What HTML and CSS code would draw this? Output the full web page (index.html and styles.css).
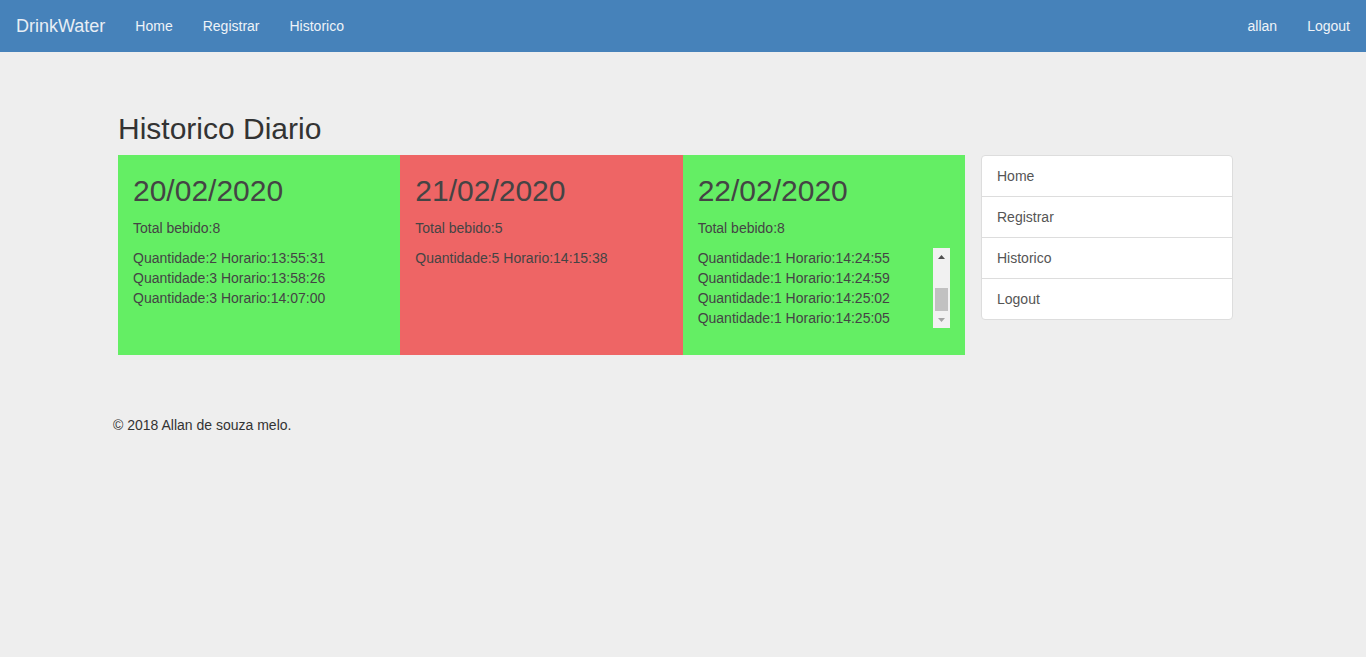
FILE: index.html
```html
<!DOCTYPE html>
<html lang="pt">
<head>
<meta charset="utf-8">
<title>DrinkWater</title>
<link rel="stylesheet" href="styles.css">
</head>
<body>
<nav class="navbar">
  <div class="nav-left">
    <a class="brand" href="#">DrinkWater</a>
    <a class="nav-link" href="#">Home</a>
    <a class="nav-link" href="#">Registrar</a>
    <a class="nav-link" href="#">Historico</a>
  </div>
  <div class="nav-right">
    <a class="nav-link" href="#">allan</a>
    <a class="nav-link" href="#">Logout</a>
  </div>
</nav>
<main class="container">
  <div class="row">
    <section class="main-col">
      <h2 class="page-title">Historico Diario</h2>
      <div class="days">
        <div class="day ok">
          <h1 class="date">20/02/2020</h1>
          <p class="total">Total bebido:8</p>
          <ul class="entries">
            <li>Quantidade:2 Horario:13:55:31</li>
            <li>Quantidade:3 Horario:13:58:26</li>
            <li>Quantidade:3 Horario:14:07:00</li>
          </ul>
        </div>
        <div class="day bad">
          <h1 class="date">21/02/2020</h1>
          <p class="total">Total bebido:5</p>
          <ul class="entries">
            <li>Quantidade:5 Horario:14:15:38</li>
          </ul>
        </div>
        <div class="day ok">
          <h1 class="date">22/02/2020</h1>
          <p class="total">Total bebido:8</p>
          <div class="scroll-wrap">
            <ul class="entries scroll" id="scrollList">
              <li>Quantidade:1 Horario:14:24:38</li>
              <li>Quantidade:1 Horario:14:24:42</li>
              <li>Quantidade:1 Horario:14:24:47</li>
              <li>Quantidade:1 Horario:14:24:51</li>
              <li>Quantidade:1 Horario:14:24:55</li>
              <li>Quantidade:1 Horario:14:24:59</li>
              <li>Quantidade:1 Horario:14:25:02</li>
              <li>Quantidade:1 Horario:14:25:05</li>
            </ul>
            <div class="fake-scrollbar" aria-hidden="true">
              <span class="sb-btn">
                <svg width="7" height="4" viewBox="0 0 7 4"><polygon points="0,4 7,4 3.5,0" fill="#505050"/></svg>
              </span>
              <span class="sb-track"><span class="sb-thumb"></span></span>
              <span class="sb-btn">
                <svg width="7" height="4" viewBox="0 0 7 4"><polygon points="0,0 7,0 3.5,4" fill="#a3a3a3"/></svg>
              </span>
            </div>
          </div>
        </div>
      </div>
    </section>
    <aside class="side-col">
      <div class="list-group">
        <a class="list-item" href="#">Home</a>
        <a class="list-item" href="#">Registrar</a>
        <a class="list-item" href="#">Historico</a>
        <a class="list-item" href="#">Logout</a>
      </div>
    </aside>
  </div>
  <footer class="footer">
    <p>&copy; 2018 Allan de souza melo.</p>
  </footer>
</main>
<script src="script.js"></script>
</body>
</html>
```
FILE: styles.css
```css
* { box-sizing: border-box; }
html, body { margin: 0; padding: 0; }
body {
  background: #eeeeee;
  font-family: "Liberation Sans", Arial, sans-serif;
  font-size: 14px;
  line-height: 20px;
  color: #333333;
}
a { text-decoration: none; }

.navbar {
  height: 52px;
  background: #4682ba;
  display: flex;
  justify-content: space-between;
  align-items: stretch;
  padding: 0 1px 0 0;
}
.nav-left, .nav-right { display: flex; align-items: stretch; }
.brand {
  font-size: 18px;
  line-height: 20px;
  padding: 16px 15px 14px;
  margin-left: 1px;
  color: #e8eef5;
}
.nav-link {
  padding: 16px 15px 14px;
  line-height: 20px;
  color: #eef3f8;
  font-size: 14px;
}

.container {
  width: 1170px;
  margin: 0 auto;
  padding: 0 15px;
}
.row {
  display: flex;
  align-items: flex-start;
  padding-left: 5px;
}
.main-col { width: 847px; }
.page-title {
  font-size: 30px;
  font-weight: 400;
  line-height: 33px;
  margin: 60px 0 10px;
  color: #333;
}
.days { display: flex; }
.day {
  flex: 1 1 0;
  height: 200px;
  padding: 15px 15px;
  color: #444;
}
.day.ok { background: #64ee64; }
.day.bad { background: #ee6565; }
.date {
  font-size: 30px;
  font-weight: 400;
  line-height: 33px;
  margin: 4px 0 11px;
}
.total { margin: 0 0 10px; }
.entries {
  list-style: none;
  margin: 0;
  padding: 0;
}
.scroll-wrap {
  position: relative;
  height: 80px;
}
.entries.scroll {
  height: 80px;
  overflow: hidden;
  padding-right: 17px;
}
.fake-scrollbar {
  position: absolute;
  top: 0;
  right: 0;
  width: 17px;
  height: 80px;
  background: #f1f1f1;
  display: flex;
  flex-direction: column;
}
.sb-btn {
  height: 17px;
  display: flex;
  align-items: center;
  justify-content: center;
}
.sb-btn svg { display: block; }
.sb-track {
  flex: 1;
  display: flex;
  flex-direction: column;
  justify-content: flex-end;
  padding: 0 2px;
}
.sb-thumb {
  height: 23px;
  background: #c1c1c1;
}
.side-col {
  width: 252px;
  margin-left: 16px;
  margin-top: 103px;
}
.list-group {
  background: #fff;
  border: 1px solid #dddddd;
  border-radius: 4px;
  display: flex;
  flex-direction: column;
}
.list-item {
  display: block;
  padding: 10px 15px;
  line-height: 20px;
  color: #555555;
  border-top: 1px solid #dddddd;
}
.list-item:first-child { border-top: 0; }

.footer {
  margin-top: 60px;
}
.footer p { margin: 0; }
```
FILE: script.js
```js
var el = document.getElementById('scrollList');
if (el) { el.scrollTop = el.scrollHeight; }
```
